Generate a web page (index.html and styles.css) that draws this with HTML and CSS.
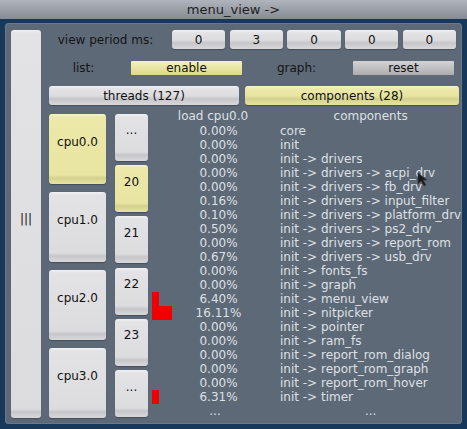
FILE: index.html
```html
<!DOCTYPE html>
<html>
<head>
<meta charset="utf-8">
<link rel="stylesheet" href="styles.css">
</head>
<body>
<div class="window">
  <div class="titlebar">menu_view -&gt;</div>
  <div class="frame">
    <div class="panel">
      <div class="btn side"><span class="lift">|||</span></div>
      <div class="main">
        <div class="row1">
          <div class="label period">view period ms:</div>
          <div class="nums">
            <div class="btn">0</div>
            <div class="btn">3</div>
            <div class="btn">0</div>
            <div class="btn">0</div>
            <div class="btn">0</div>
          </div>
        </div>
        <div class="row2">
          <div class="label l-list">list:</div>
          <div class="flat yel-flat b-enable">enable</div>
          <div class="label l-graph">graph:</div>
          <div class="flat gray-flat b-reset">reset</div>
        </div>
        <div class="row3">
          <div class="btn b-threads">threads (127)</div>
          <div class="btn yel b-comps">components (28)</div>
        </div>
        <div class="content">
          <div class="cpus">
            <div class="btn yel tall"><span class="lift">cpu0.0</span></div>
            <div class="btn tall"><span class="lift">cpu1.0</span></div>
            <div class="btn tall"><span class="lift">cpu2.0</span></div>
            <div class="btn tall"><span class="lift">cpu3.0</span></div>
          </div>
          <div class="threads">
            <div class="btn tall"><span class="lift">...</span></div>
            <div class="btn yel tall"><span class="lift">20</span></div>
            <div class="btn tall"><span class="lift">21</span></div>
            <div class="btn tall"><span class="lift">22</span></div>
            <div class="btn tall"><span class="lift">23</span></div>
            <div class="btn tall"><span class="lift">...</span></div>
          </div>
          <div class="table">
            <div class="bc"></div><div class="pct head">load cpu0.0</div><div class="comp head">components</div>
            <div class="bc"></div><div class="pct">0.00%</div><div class="comp">core</div>
            <div class="bc"></div><div class="pct">0.00%</div><div class="comp">init</div>
            <div class="bc"></div><div class="pct">0.00%</div><div class="comp">init -&gt; drivers</div>
            <div class="bc"></div><div class="pct">0.00%</div><div class="comp">init -&gt; drivers -&gt; acpi_drv</div>
            <div class="bc"></div><div class="pct">0.00%</div><div class="comp">init -&gt; drivers -&gt; fb_drv</div>
            <div class="bc"></div><div class="pct">0.16%</div><div class="comp">init -&gt; drivers -&gt; input_filter</div>
            <div class="bc"></div><div class="pct">0.10%</div><div class="comp">init -&gt; drivers -&gt; platform_drv</div>
            <div class="bc"></div><div class="pct">0.50%</div><div class="comp">init -&gt; drivers -&gt; ps2_drv</div>
            <div class="bc"></div><div class="pct">0.00%</div><div class="comp">init -&gt; drivers -&gt; report_rom</div>
            <div class="bc"></div><div class="pct">0.67%</div><div class="comp">init -&gt; drivers -&gt; usb_drv</div>
            <div class="bc"></div><div class="pct">0.00%</div><div class="comp">init -&gt; fonts_fs</div>
            <div class="bc"></div><div class="pct">0.00%</div><div class="comp">init -&gt; graph</div>
            <div class="bc"><div class="bar" style="width:7px"></div></div><div class="pct">6.40%</div><div class="comp">init -&gt; menu_view</div>
            <div class="bc"><div class="bar" style="width:20px"></div></div><div class="pct">16.11%</div><div class="comp">init -&gt; nitpicker</div>
            <div class="bc"></div><div class="pct">0.00%</div><div class="comp">init -&gt; pointer</div>
            <div class="bc"></div><div class="pct">0.00%</div><div class="comp">init -&gt; ram_fs</div>
            <div class="bc"></div><div class="pct">0.00%</div><div class="comp">init -&gt; report_rom_dialog</div>
            <div class="bc"></div><div class="pct">0.00%</div><div class="comp">init -&gt; report_rom_graph</div>
            <div class="bc"></div><div class="pct">0.00%</div><div class="comp">init -&gt; report_rom_hover</div>
            <div class="bc"><div class="bar" style="width:7px"></div></div><div class="pct">6.31%</div><div class="comp">init -&gt; timer</div>
            <div class="bc"></div><div class="pct dots">...</div><div class="comp head">...</div>
          </div>
        </div>
      </div>
    </div>
  </div>
  <svg class="cursor" width="14" height="16" viewBox="0 0 14 16"><polygon points="1,1 1,12 4,9 7,14 9,13 6,8 10,8" fill="#1c1c1c" stroke="#3a3a3a" stroke-width="0.6"/></svg>
</div>
</body>
</html>
```

FILE: styles.css
```css
html, body {
  margin: 0;
  padding: 0;
}
body {
  background: #7b7b7b;
  font-family: "DejaVu Sans", sans-serif;
  font-size: 12px;
  width: 467px;
  height: 429px;
  overflow: hidden;
}
.window {
  position: relative;
  width: 467px;
  height: 424px;
  display: flex;
  flex-direction: column;
}
.titlebar {
  height: 19px;
  line-height: 20px;
  background: linear-gradient(#b0b4bc 0, #9da1aa 45%, #868b94 100%);
  color: #1e1e1e;
  font-size: 13px;
  text-align: center;
}
.frame {
  flex: 1;
  background: #17385b;
  padding: 4px 5px 5px 5px;
  display: flex;
}
.panel {
  flex: 1;
  background: #5e6978;
  border-radius: 4px;
  box-shadow: inset 0 0 0 1px #6d7887;
  padding: 7px 3px 6px 6px;
  display: flex;
  gap: 8px;
  overflow: hidden;
}
.btn {
  background: linear-gradient(to bottom, #f2f2f4 0, #e3e3e5 3px, #dcdcde calc(100% - 9px), #c6c6ca calc(100% - 6px), #d0d0d3 calc(100% - 3px), #d8d8da 100%);
  border-radius: 3px;
  box-shadow: 0 1px 1px rgba(20, 30, 45, 0.35);
  color: #111;
  display: flex;
  align-items: center;
  justify-content: center;
  white-space: nowrap;
}
.yel {
  background: linear-gradient(to bottom, #f6f4c8 0, #ece9a9 3px, #e8e5a2 calc(100% - 9px), #d4d08e calc(100% - 6px), #dedb98 calc(100% - 3px), #e5e2a0 100%);
}
.side {
  width: 30px;
  flex: none;
}
.side .lift {
  padding-bottom: 11px;
}
.tall .lift {
  padding-bottom: 14px;
}
.main {
  flex: 1;
  min-width: 0;
  display: flex;
  flex-direction: column;
}
.label {
  color: #141414;
  text-align: center;
  white-space: nowrap;
}
.row1 {
  display: flex;
  height: 19px;
  align-items: center;
  padding-right: 3px;
}
.period {
  width: 113px;
  margin-right: 10px;
}
.nums {
  flex: 1;
  height: 19px;
  display: flex;
  gap: 4.5px;
}
.nums .btn {
  flex: 1;
}
.row2 {
  margin-top: 12px;
  height: 14px;
  display: flex;
  align-items: center;
}
.flat {
  height: 14px;
  line-height: 14px;
  text-align: center;
  color: #111;
  border-radius: 1px;
}
.yel-flat {
  background: linear-gradient(#f3f1c0, #e6e39f 60%, #dcd893);
}
.gray-flat {
  background: linear-gradient(#d2d2d4, #bdbdc0 60%, #adadb0);
}
.l-list {
  width: 69px;
  margin-right: 13px;
}
.b-enable {
  width: 111px;
}
.l-graph {
  width: 109px;
}
.b-reset {
  width: 101px;
  margin-left: 2px;
}
.row3 {
  margin-top: 11px;
  height: 19px;
  display: flex;
  gap: 6px;
}
.b-threads {
  width: 190px;
}
.b-comps {
  flex: 1;
}
.content {
  margin-top: 4px;
  flex: 1;
  display: flex;
}
.cpus {
  width: 57px;
  flex: none;
  padding-top: 5px;
  display: flex;
  flex-direction: column;
  gap: 8px;
}
.cpus .btn {
  flex: 1;
}
.threads {
  width: 33px;
  flex: none;
  margin-left: 9px;
  padding-top: 5px;
  padding-bottom: 1px;
  display: flex;
  flex-direction: column;
  gap: 4.4px;
}
.threads .btn {
  flex: 1;
}
.table {
  flex: none;
  margin-left: 4px;
  display: grid;
  grid-template-columns: 23px 105px auto;
  grid-template-rows: 15px;
  grid-auto-rows: 14px;
  color: #dde0e4;
  line-height: 14px;
  white-space: nowrap;
}
.bc {
  display: flex;
  align-items: stretch;
}
.bar {
  background: #f00000;
}
.pct {
  text-align: center;
  padding-right: 18px;
}
.pct.head {
  padding-right: 29px;
  line-height: 15px;
}
.pct.dots {
  padding-right: 25px;
}
.comp {
  text-align: left;
}
.comp.head {
  text-align: center;
}
.table > .head:nth-child(3) {
  line-height: 15px;
}
.cursor {
  position: absolute;
  left: 417px;
  top: 172px;
}
```
